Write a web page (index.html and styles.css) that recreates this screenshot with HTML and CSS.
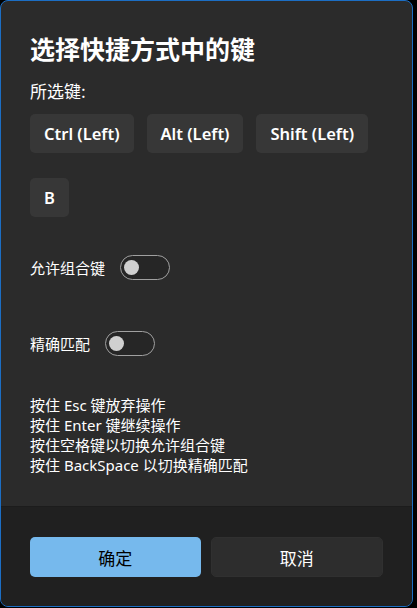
FILE: index.html
```html
<!DOCTYPE html>
<html lang="zh-CN">
<head>
<meta charset="utf-8">
<link rel="stylesheet" href="styles.css">
</head>
<body>
<div class="dialog">
  <div class="content">
    <div class="title">选择快捷方式中的键</div>
    <div class="subtitle">所选键:</div>
    <div class="keys">
      <div class="key">Ctrl (Left)</div>
      <div class="key">Alt (Left)</div>
      <div class="key">Shift (Left)</div>
      <div class="key">B</div>
    </div>
    <div class="toggle-row first">
      <span class="toggle-label">允许组合键</span>
      <span class="toggle"><span class="knob"></span></span>
    </div>
    <div class="toggle-row second">
      <span class="toggle-label">精确匹配</span>
      <span class="toggle"><span class="knob"></span></span>
    </div>
    <div class="hints">
      <div>按住 Esc 键放弃操作</div>
      <div>按住 Enter 键继续操作</div>
      <div>按住空格键以切换允许组合键</div>
      <div>按住 BackSpace 以切换精确匹配</div>
    </div>
  </div>
  <div class="footer">
    <div class="btn primary">确定</div>
    <div class="btn secondary">取消</div>
  </div>
</div>
</body>
</html>
```

FILE: styles.css
```css
html, body {
  margin: 0;
  padding: 0;
  background: #000;
}
body {
  width: 417px;
  height: 608px;
  overflow: hidden;
  font-family: "Noto Sans", "Noto Sans CJK SC", sans-serif;
  color: #fff;
}
.dialog {
  box-sizing: border-box;
  width: 413px;
  height: 607px;
  border: 1px solid #1c6ec4;
  border-radius: 8px;
  background: #2b2b2b;
  display: flex;
  flex-direction: column;
  overflow: hidden;
}
.content {
  flex: 1;
  padding: 32px 29px 0;
}
.title {
  font-size: 25px;
  font-weight: 700;
  line-height: 30px;
  font-family: "Noto Sans CJK SC", sans-serif;
}
.subtitle {
  margin-top: 17px;
  font-size: 17px;
  line-height: 22px;
  font-family: "Noto Sans CJK SC", sans-serif;
}
.keys {
  margin-top: 12px;
  display: flex;
  flex-wrap: wrap;
  column-gap: 13px;
  row-gap: 25px;
  width: 350px;
}
.key {
  height: 39px;
  padding: 0 14px;
  background: #373737;
  border-radius: 5px;
  font-size: 16.5px;
  font-weight: 600;
  display: flex;
  align-items: center;
}
.toggle-row {
  display: flex;
  align-items: center;
  gap: 15px;
  height: 25px;
}
.toggle-row.first {
  margin-top: 38px;
}
.toggle-row.second {
  margin-top: 51px;
}
.toggle-label {
  font-size: 15px;
  font-family: "Noto Sans CJK SC", sans-serif;
}
.toggle {
  box-sizing: border-box;
  width: 50px;
  height: 25px;
  border: 1px solid #a0a0a0;
  border-radius: 13px;
  background: #262626;
  display: flex;
  align-items: center;
  padding-left: 3px;
}
.knob {
  width: 15px;
  height: 15px;
  border-radius: 50%;
  background: #d0d0d0;
}
.hints {
  margin-top: 39px;
  font-size: 15px;
  line-height: 20px;
}
.footer {
  height: 100px;
  box-sizing: border-box;
  background: #202020;
  border-top: 1px solid #1c1c1c;
  padding: 30px 29px 0;
  display: flex;
  gap: 10px;
}
.btn {
  flex: 1;
  height: 40px;
  border-radius: 5px;
  display: flex;
  align-items: center;
  justify-content: center;
  font-size: 17px;
  font-family: "Noto Sans CJK SC", sans-serif;
}
.primary {
  background: #76b9ed;
  color: #000;
}
.secondary {
  box-sizing: border-box;
  background: #2d2d2d;
  border: 1px solid #303030;
  color: #fff;
}
```
